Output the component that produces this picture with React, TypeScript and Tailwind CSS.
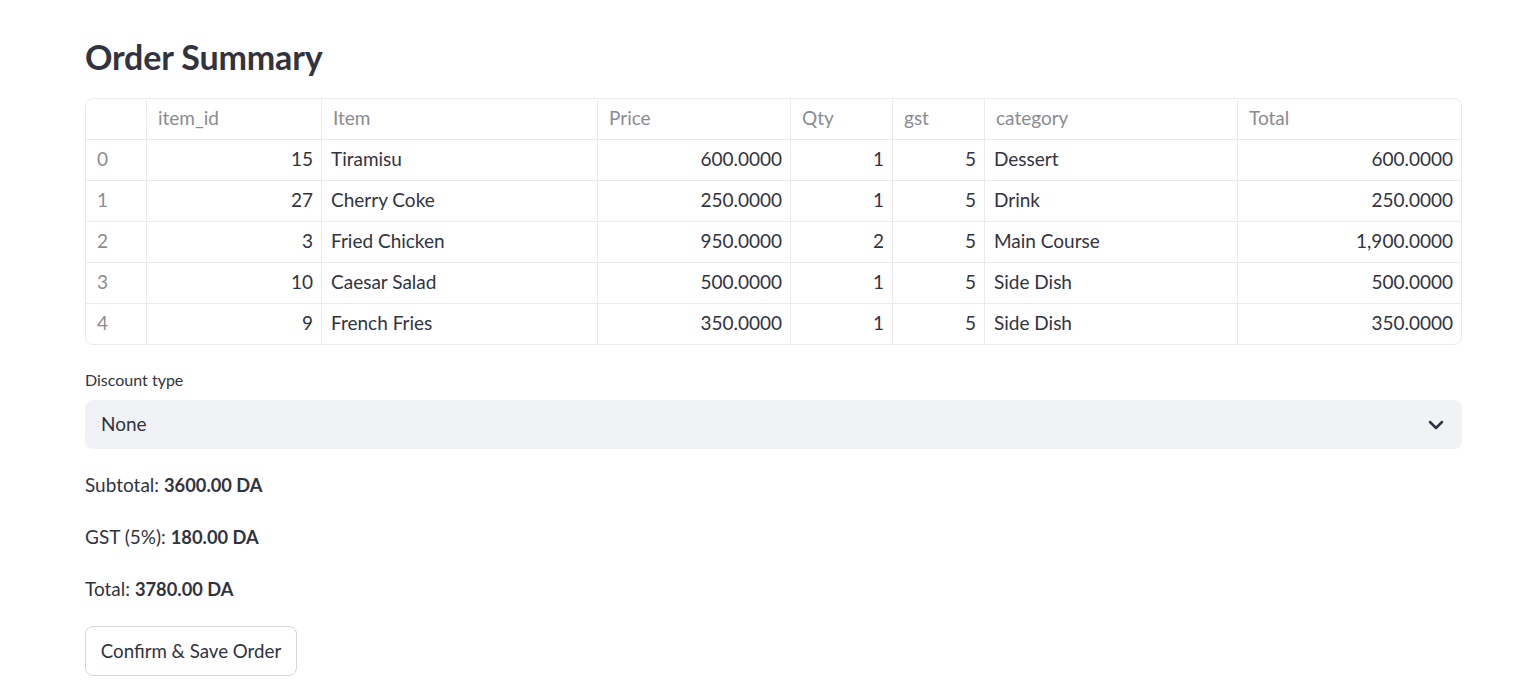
import { ChevronDown } from "lucide-react";

type Row = {
  id: number;
  item: string;
  price: string;
  qty: number;
  gst: number;
  category: string;
  total: string;
};

const rows: Row[] = [
  { id: 15, item: "Tiramisu", price: "600.0000", qty: 1, gst: 5, category: "Dessert", total: "600.0000" },
  { id: 27, item: "Cherry Coke", price: "250.0000", qty: 1, gst: 5, category: "Drink", total: "250.0000" },
  { id: 3, item: "Fried Chicken", price: "950.0000", qty: 2, gst: 5, category: "Main Course", total: "1,900.0000" },
  { id: 10, item: "Caesar Salad", price: "500.0000", qty: 1, gst: 5, category: "Side Dish", total: "500.0000" },
  { id: 9, item: "French Fries", price: "350.0000", qty: 1, gst: 5, category: "Side Dish", total: "350.0000" },
];

const headers = ["", "item_id", "Item", "Price", "Qty", "gst", "category", "Total"];

const grid =
  "grid grid-cols-[61px_175px_276px_193px_102px_92px_253px_1fr]";

function Cell({
  children,
  right,
  muted,
  last,
  bottom,
}: {
  children?: React.ReactNode;
  right?: boolean;
  muted?: boolean;
  last?: boolean;
  bottom?: boolean;
}) {
  return (
    <div
      className={
        "flex items-center truncate px-[9px] pb-[2px] " +
        (right ? "justify-end pr-[8px] " : "") +
        (muted ? "text-[#8b8c93] " : "text-[#31333f] ") +
        (last ? "" : "border-r border-[#ebebef] ") +
        (bottom ? "h-[41px] border-b border-[#ebebef]" : "h-[40px]")
      }
    >
      {children}
    </div>
  );
}

function Line({ label, value }: { label: string; value: string }) {
  return (
    <p className="h-[28px]">
      {label}: <b className="text-[18.3px] leading-none">{value}</b>
    </p>
  );
}

export default function App() {
  return (
    <div
      className="min-h-screen bg-white text-[#31333f]"
      style={{ fontFamily: "Lato, 'Noto Sans', sans-serif" }}
    >
      <div className="ml-[85px] w-[1377px] pt-[35px]">
        <h1 className="text-[34px] font-bold leading-[44px] tracking-[-0.15px]">
          Order Summary
        </h1>

        <div className="mt-[19px] overflow-hidden rounded-lg border border-[#ebebef] text-[19px]">
          <div className={grid}>
            {headers.map((h, i) => (
              <Cell key={i} muted bottom last={i === headers.length - 1}>
                <span className="pl-[2px]">{h}</span>
              </Cell>
            ))}
          </div>
          {rows.map((r, idx) => {
            const bottom = idx < rows.length - 1;
            return (
              <div key={idx} className={grid}>
                <Cell muted bottom={bottom}>
                  <span className="pl-[2px]">{idx}</span>
                </Cell>
                <Cell right bottom={bottom}>{r.id}</Cell>
                <Cell bottom={bottom}>{r.item}</Cell>
                <Cell right bottom={bottom}>{r.price}</Cell>
                <Cell right bottom={bottom}>{r.qty}</Cell>
                <Cell right bottom={bottom}>{r.gst}</Cell>
                <Cell bottom={bottom}>{r.category}</Cell>
                <Cell right bottom={bottom} last>
                  {r.total}
                </Cell>
              </div>
            );
          })}
        </div>

        <div className="mt-[24px] text-[16px] leading-[22px]">Discount type</div>
        <div className="mt-[9px] flex h-[49px] items-center justify-between rounded-lg bg-[#f0f2f6] pl-[16px] pr-[14px] text-[19px]">
          <span>None</span>
          <ChevronDown className="h-6 w-6" strokeWidth={2.5} />
        </div>

        <div className="mt-[22px] flex flex-col gap-[24px] text-[19px] leading-[28px]">
          <Line label="Subtotal" value="3600.00 DA" />
          <Line label="GST (5%)" value="180.00 DA" />
          <Line label="Total" value="3780.00 DA" />
        </div>

        <button className="mt-[23px] h-[50px] w-[212px] rounded-lg border border-[#d5d6d9] bg-white text-[18.7px] text-[#31333f]">
          Confirm &amp; Save Order
        </button>
      </div>
    </div>
  );
}
